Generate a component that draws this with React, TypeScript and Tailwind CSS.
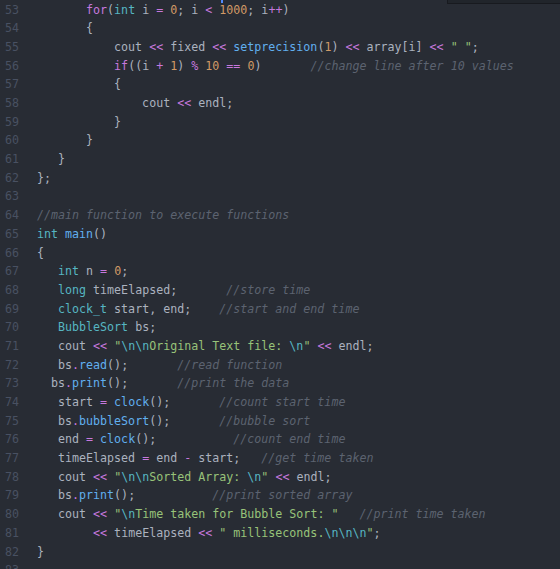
type Tok = [string, string]

const tone: Record<string, string> = {
  p: "text-[#abb2bf]",
  k: "text-[#c678dd]",
  t: "text-[#56b6c2]",
  f: "text-[#61afef]",
  n: "text-[#d19a66]",
  s: "text-[#98c379]",
  e: "text-[#56b6c2]",
  c: "text-[#5c6370] italic",
}

// lines 53..83 of the bubble sort file
const lines: Tok[][] = [
  [["p", "       "], ["k", "for"], ["p", "("], ["t", "int"], ["p", " i "], ["k", "="], ["p", " "], ["n", "0"], ["p", "; i "], ["k", "<"], ["p", " "], ["n", "1000"], ["p", "; i"], ["k", "++"], ["p", ")"]],
  [["p", "       {"]],
  [["p", "           cout "], ["k", "<<"], ["p", " fixed "], ["k", "<<"], ["p", " "], ["f", "setprecision"], ["p", "("], ["n", "1"], ["p", ") "], ["k", "<<"], ["p", " array[i] "], ["k", "<<"], ["p", " "], ["s", '" "'], ["p", ";"]],
  [["p", "           "], ["k", "if"], ["p", "((i "], ["k", "+"], ["p", " "], ["n", "1"], ["p", ") "], ["k", "%"], ["p", " "], ["n", "10"], ["p", " "], ["k", "=="], ["p", " "], ["n", "0"], ["p", ")       "], ["c", "//change line after 10 values"]],
  [["p", "           {"]],
  [["p", "               cout "], ["k", "<<"], ["p", " endl;"]],
  [["p", "           }"]],
  [["p", "       }"]],
  [["p", "   }"]],
  [["p", "};"]],
  [],
  [["c", "//main function to execute functions"]],
  [["t", "int"], ["p", " "], ["f", "main"], ["p", "()"]],
  [["p", "{"]],
  [["p", "   "], ["t", "int"], ["p", " n "], ["k", "="], ["p", " "], ["n", "0"], ["p", ";"]],
  [["p", "   "], ["t", "long"], ["p", " timeElapsed;       "], ["c", "//store time"]],
  [["p", "   "], ["t", "clock_t"], ["p", " start, end;    "], ["c", "//start and end time"]],
  [["p", "   "], ["t", "BubbleSort"], ["p", " bs;"]],
  [["p", "   cout "], ["k", "<<"], ["p", " "], ["s", '"'], ["e", "\\n\\n"], ["s", "Original Text file: "], ["e", "\\n"], ["s", '"'], ["p", " "], ["k", "<<"], ["p", " endl;"]],
  [["p", "   bs"], ["k", "."], ["f", "read"], ["p", "();       "], ["c", "//read function"]],
  [["p", "  bs"], ["k", "."], ["f", "print"], ["p", "();       "], ["c", "//print the data"]],
  [["p", "   start "], ["k", "="], ["p", " "], ["f", "clock"], ["p", "();       "], ["c", "//count start time"]],
  [["p", "   bs"], ["k", "."], ["f", "bubbleSort"], ["p", "();       "], ["c", "//bubble sort"]],
  [["p", "   end "], ["k", "="], ["p", " "], ["f", "clock"], ["p", "();           "], ["c", "//count end time"]],
  [["p", "   timeElapsed "], ["k", "="], ["p", " end "], ["k", "-"], ["p", " start;   "], ["c", "//get time taken"]],
  [["p", "   cout "], ["k", "<<"], ["p", " "], ["s", '"'], ["e", "\\n\\n"], ["s", "Sorted Array: "], ["e", "\\n"], ["s", '"'], ["p", " "], ["k", "<<"], ["p", " endl;"]],
  [["p", "   bs"], ["k", "."], ["f", "print"], ["p", "();           "], ["c", "//print sorted array"]],
  [["p", "   cout "], ["k", "<<"], ["p", " "], ["s", '"'], ["e", "\\n"], ["s", 'Time taken for Bubble Sort: "'], ["p", "   "], ["c", "//print time taken"]],
  [["p", "        "], ["k", "<<"], ["p", " timeElapsed "], ["k", "<<"], ["p", " "], ["s", '" milliseconds.'], ["e", "\\n\\n\\n"], ["s", '"'], ["p", ";"]],
  [["p", "}"]],
  [],
]

export default function App() {
  return (
    <div className="relative w-[560px] h-[569px] overflow-hidden bg-[#282c34] font-['DejaVu_Sans_Mono',monospace] text-[11.65px]">
      {/* panel edge peeking from above + cursor mark */}
      <div className="absolute top-0 left-[447px] right-0 h-[4px] bg-[#21252b] border-b border-l border-[#181a1f]" />
      <div className="absolute top-0 left-[221px] w-[2px] h-[3px] bg-[#528bff]" />

      <div className="flex flex-col pt-[0.6px]">
        {lines.map((toks, i) => (
          <div key={i} className="flex h-[18.7px] leading-[18.7px]">
            <div className="w-[19px] shrink-0 text-right text-[#495162]">{53 + i}</div>
            <div className="ml-[18px] whitespace-pre">
              {toks.map((t, j) => (
                <span key={j} className={tone[t[0]]}>
                  {t[1]}
                </span>
              ))}
            </div>
          </div>
        ))}
      </div>
    </div>
  )
}
